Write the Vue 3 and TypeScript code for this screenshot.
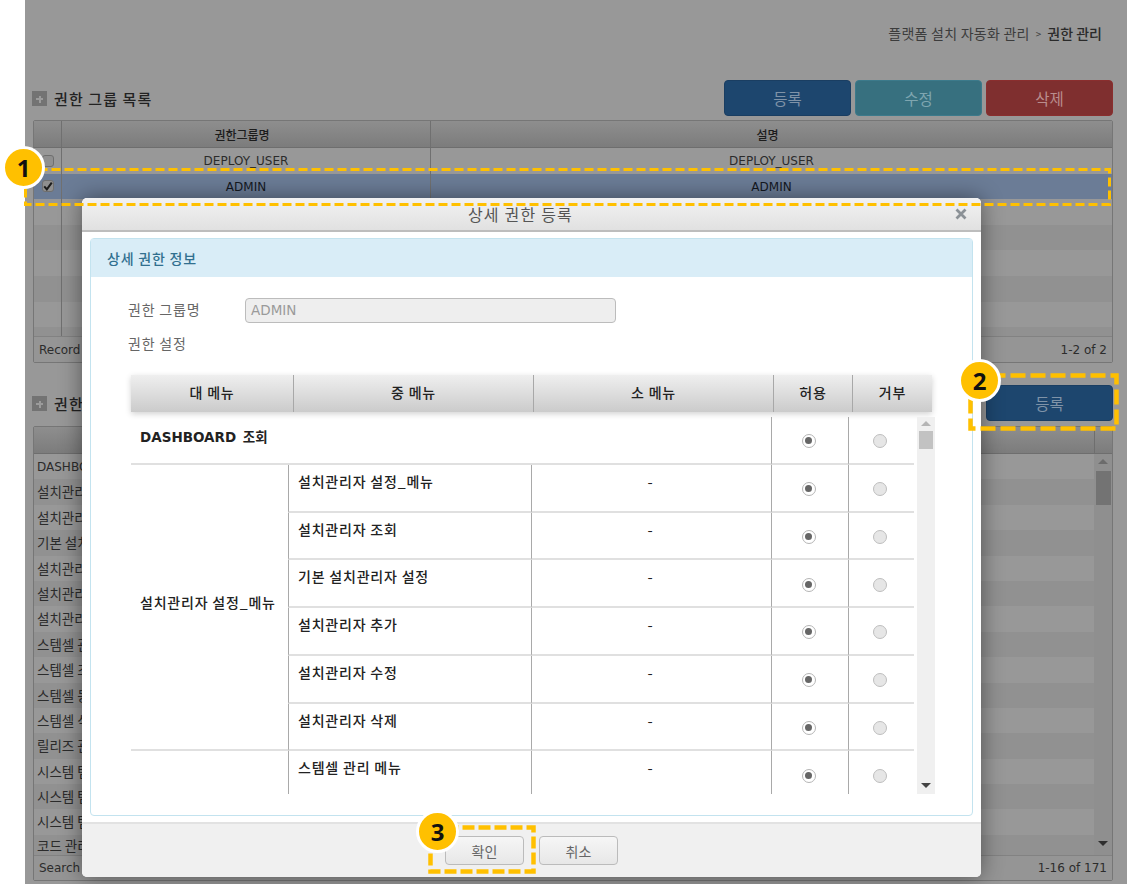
<script setup lang="ts">
const crumbs = '플랫폼 설치 자동화 관리'

const groupRows = [
  { name: 'DEPLOY_USER', desc: 'DEPLOY_USER', checked: false },
  { name: 'ADMIN', desc: 'ADMIN', checked: true },
  { name: '', desc: '', checked: false },
  { name: '', desc: '', checked: false },
  { name: '', desc: '', checked: false },
  { name: '', desc: '', checked: false },
  { name: '', desc: '', checked: false },
  { name: '', desc: '', checked: false },
]

const authRows = [
  'DASHBOARD 조회',
  '설치관리자 설정_메뉴',
  '설치관리자 조회',
  '기본 설치관리자 설정',
  '설치관리자 추가',
  '설치관리자 수정',
  '설치관리자 삭제',
  '스템셀 관리 메뉴',
  '스템셀 조회',
  '스템셀 등록',
  '스템셀 삭제',
  '릴리즈 관리',
  '시스템 템플릿 관리',
  '시스템 템플릿 조회',
  '시스템 템플릿 등록',
  '코드 관리',
]

const heads = ['대 메뉴', '중 메뉴', '소 메뉴', '허용', '거부']

const menus = [
  {
    name: '설치관리자 설정_메뉴',
    items: ['설치관리자 설정_메뉴', '설치관리자 조회', '기본 설치관리자 설정', '설치관리자 추가', '설치관리자 수정', '설치관리자 삭제'],
  },
  { name: '', items: ['스템셀 관리 메뉴'] },
]
</script>

<template>
  <div class="shell">
    <main class="page">
      <div class="crumbs"><span class="path">{{ crumbs }}</span> <span class="gt">&gt;</span> <b>권한 관리</b></div>

      <div class="toolbar">
        <h2 class="title"><i class="plus" />권한 그룹 목록</h2>
        <div class="btns">
          <button class="btn navy">등록</button>
          <button class="btn teal">수정</button>
          <button class="btn red">삭제</button>
        </div>
      </div>

      <section class="grid first">
        <div class="ghead">
          <div class="gc check" />
          <div class="gc name">권한그룹명</div>
          <div class="gc desc">설명</div>
        </div>
        <div class="gbody">
          <div
            v-for="(r, i) in groupRows"
            :key="i"
            class="grow"
            :class="{ alt: i % 2 === 1, sel: r.checked }"
          >
            <div class="gc check">
              <span v-if="r.name" class="box">
                <svg v-if="r.checked" viewBox="0 0 12 12" width="10" height="10">
                  <path d="M1.5 6.5 4.6 10 10.5 2" fill="none" stroke="#1b1b1b" stroke-width="2.4" />
                </svg>
              </span>
            </div>
            <div class="gc name">{{ r.name }}</div>
            <div class="gc desc">{{ r.desc }}</div>
          </div>
        </div>
        <div class="gfoot"><span>Record</span><span>1-2 of 2</span></div>
      </section>

      <div class="toolbar second">
        <h2 class="title"><i class="plus" />권한 목록</h2>
        <div class="btns">
          <button class="btn navy">등록</button>
        </div>
      </div>

      <section class="grid last">
        <div class="ghead">
          <div class="gc wide" />
          <div class="gc edge" />
        </div>
        <div class="lbody">
          <div class="lrows">
            <div v-for="(t, i) in authRows" :key="i" class="lrow" :class="{ alt: i % 2 === 1, ko: i > 0 }">{{ t }}</div>
          </div>
          <div class="lscroll">
            <i class="arrow up" />
            <i class="thumb" />
            <i class="arrow down" />
          </div>
        </div>
        <div class="gfoot"><span>Search</span><span>1-16 of 171</span></div>
      </section>
    </main>

    <div class="modal">
      <header class="mhead">
        <span>상세 권한 등록</span>
        <svg class="close" viewBox="0 0 12 12" width="12" height="12">
          <path d="M1.5 1.5 10.5 10.5M10.5 1.5 1.5 10.5" stroke="#8b9196" stroke-width="2.8" />
        </svg>
      </header>

      <div class="panel">
        <div class="phead">상세 권한 정보</div>
        <div class="pbody">
          <div class="frow">
            <label>권한 그룹명</label>
            <div class="input">ADMIN</div>
          </div>
          <div class="frow second-row"><label>권한 설정</label></div>

          <div class="thead">
            <div v-for="h in heads" :key="h" class="th">{{ h }}</div>
          </div>

          <div class="tscroll">
            <div class="tbody">
              <div class="td top span3"><b>DASHBOARD 조회</b></div>
              <div class="td line radio-cell"><i class="radio on" /></div>
              <div class="td line radio-cell deny"><i class="radio" /></div>
              <template v-for="m in menus" :key="m.name">
                <div class="td grp" :style="{ gridRow: 'span ' + m.items.length }">{{ m.name }}</div>
                <template v-for="it in m.items" :key="it">
                  <div class="td line sub">{{ it }}</div>
                  <div class="td line dash">-</div>
                  <div class="td line radio-cell"><i class="radio on" /></div>
                  <div class="td line radio-cell deny"><i class="radio" /></div>
                </template>
              </template>
            </div>
            <div class="tbar">
              <i class="arrow up light" />
              <i class="thumb light" />
              <i class="arrow down" />
            </div>
          </div>
        </div>
      </div>

      <footer class="mfoot">
        <button class="plain">확인</button>
        <button class="plain">취소</button>
      </footer>
    </div>

    <!-- guide marks on top of the screenshot -->
    <svg class="marks" width="1127" height="884" viewBox="0 0 1127 884">
      <rect x="25.5" y="169.5" width="1084" height="35" fill="none" stroke="#ffc000" stroke-width="3" stroke-dasharray="9 4" />
      <rect x="970.5" y="375.5" width="146" height="53" fill="none" stroke="#ffc000" stroke-width="4.5" stroke-dasharray="15 5" />
      <rect x="430.5" y="827.5" width="103" height="44" fill="none" stroke="#ffc000" stroke-width="4.5" stroke-dasharray="12 4" />
    </svg>
    <span class="badge one">1</span>
    <span class="badge two">2</span>
    <span class="badge three">3</span>
  </div>
</template>

<style scoped>
.shell {
  position: relative;
  width: 1127px;
  height: 884px;
  overflow: hidden;
  background: #fff;
  font-family: "DejaVu Sans", "Noto Sans CJK KR", sans-serif;
  font-size: 12px;
  color: #222;
}
.page {
  margin-left: 25px;
  height: 884px;
  padding: 0 14px 0 8px;
  box-sizing: border-box;
  background: #989898;
}
.crumbs {
  height: 66px;
  display: flex;
  align-items: center;
  justify-content: flex-end;
  gap: 6px;
  padding-right: 11px;
  font-family: "Noto Sans CJK KR", sans-serif;
  font-size: 14px;
  color: #3c3c3c;
}
.path { letter-spacing: 0.25px; }
.crumbs b { font-weight: 500; color: #2a2a2a; }
.gt { font-size: 10px; }
.toolbar {
  margin-top: 14px;
  height: 35px;
  display: flex;
  align-items: center;
  justify-content: space-between;
}
.toolbar.second { margin-top: 22px; height: 36px; }
.title {
  margin: 0 0 0 -1px;
  display: flex;
  align-items: center;
  gap: 7px;
  padding-top: 2px;
  font-family: "Noto Sans CJK KR", sans-serif;
  font-size: 15px;
  font-weight: 500;
  letter-spacing: 1.1px;
  color: #222;
}
.toolbar.second .title { padding-top: 1px; }
.plus {
  position: relative;
  width: 15px;
  height: 15px;
  background: #737373;
}
.plus::before, .plus::after {
  content: "";
  position: absolute;
  background: #9b9b9b;
}
.plus::before { left: 4px; top: 7px; width: 7px; height: 2px; }
.plus::after { left: 6.5px; top: 4.5px; width: 2px; height: 7px; }
.btns { display: flex; gap: 4px; }
.btn {
  width: 127px;
  height: 36px;
  border-radius: 4px;
  border: 1px solid transparent;
  font-family: "Noto Sans CJK KR", sans-serif;
  font-size: 15.5px;
  padding: 0;
}
.navy { background: #1d466e; border-color: #1a3e62; color: #7f93a8; }
.teal { background: #37707f; border-color: #3c7a8b; color: #7fa6b0; }
.red { background: #7f2f2f; border-color: #8a2e2e; color: #b98d8d; }

.grid {
  margin-top: 5px;
  border: 1px solid #767676;
  border-radius: 2px;
  display: flex;
  flex-direction: column;
}
.grid.first { height: 243px; box-sizing: border-box; }
.grid.last { height: 455px; box-sizing: border-box; }
.ghead {
  height: 26px;
  flex: none;
  display: flex;
  background: linear-gradient(#8e8e8e, #7c7c7c);
  border-bottom: 1px solid #6e6e6e;
  font-family: "Noto Sans CJK KR", sans-serif;
  font-weight: 500;
  color: #1c1c1c;
}
.ghead .gc.name, .ghead .gc.desc { padding-right: 8px; }
.gc {
  display: flex;
  align-items: center;
  justify-content: center;
  box-sizing: border-box;
}
.check { width: 27px; flex: none; }
.name { width: 369px; flex: none; border-left: 1px solid #707070; }
.desc { flex: 1; border-left: 1px solid #707070; }
.ghead .wide { flex: 1; }
.ghead .edge { width: 18px; flex: none; border-left: 1px solid #6e6e6e; }
.gbody { flex: 1; overflow: hidden; }
.grow {
  height: 25.6px;
  display: flex;
  background: #989898;
  color: #2b2b2b;
}
.grow.alt { background: #919191; }
.grow .gc.name, .grow .gc.desc { padding-top: 1px; }
.grow.sel { background: #6b7c96; color: #14181f; }
.box {
  width: 12px;
  height: 12px;
  box-sizing: border-box;
  margin-left: 1px;
  border: 1px solid #6f6f6f;
  border-radius: 3px;
  background: #8f8f8f;
  display: flex;
  align-items: center;
  justify-content: center;
}
.gfoot {
  height: 25px;
  flex: none;
  display: flex;
  align-items: center;
  justify-content: space-between;
  padding: 0 5px;
  border-top: 1px solid #828282;
  background: #959595;
  color: #2c2c2c;
}
.last .gfoot { height: 24px; }
.lbody { flex: 1; display: flex; overflow: hidden; min-height: 0; }
.lrows { flex: 1; overflow: hidden; }
.lrow {
  height: 25.4px;
  line-height: 27px;
  padding-left: 3px;
  background: #989898;
  color: #2b2b2b;
  white-space: nowrap;
}
.lrow.ko { font-family: "Noto Sans CJK KR", sans-serif; font-size: 13.5px; line-height: 24px; }
.lrow.alt { background: #919191; }
.lrow:last-child { height: 19.5px; line-height: 19.5px; padding-top: 1px; }
.lscroll {
  width: 18px;
  flex: none;
  background: #8f8f8f;
  display: flex;
  flex-direction: column;
  align-items: center;
  padding-top: 5px;
  box-sizing: border-box;
  position: relative;
}
.arrow { width: 0; height: 0; border-left: 5px solid transparent; border-right: 5px solid transparent; }
.arrow.up { border-bottom: 5px solid #6c6c6c; }
.arrow.down {
  position: absolute;
  bottom: 9px;
  border-top: 5px solid #2e2e2e;
}
.thumb {
  margin-top: 7px;
  width: 15px;
  height: 34px;
  background: #737373;
}

.modal {
  position: absolute;
  left: 82px;
  top: 198px;
  width: 899px;
  height: 679px;
  display: flex;
  flex-direction: column;
  background: #fff;
  border-radius: 5px;
  box-shadow: 0 0 22px rgba(0, 0, 0, 0.45);
  font-family: "Noto Sans CJK KR", sans-serif;
}
.mhead {
  position: relative;
  height: 34px;
  flex: none;
  box-sizing: border-box;
  display: flex;
  align-items: center;
  justify-content: center;
  padding-right: 22px;
  border-radius: 5px 5px 0 0;
  border-bottom: 2px solid #bdbdbd;
  background: linear-gradient(#f2f2f2, #e1e1e1);
  font-size: 16px;
  letter-spacing: 1.2px;
  color: #555;
}
.close { position: absolute; right: 14px; top: 10px; }
.panel {
  margin: 6px 8px 6px;
  flex: 1;
  min-height: 0;
  display: flex;
  flex-direction: column;
  border: 1px solid #c3e3ef;
  border-radius: 4px;
}
.phead {
  height: 37px;
  flex: none;
  display: flex;
  align-items: center;
  padding: 0 0 1px 16px;
  background: #d9edf7;
  color: #31708f;
  font-size: 14px;
  font-weight: 500;
  letter-spacing: 0.8px;
}
.pbody { flex: 1; padding: 21px 0 0 37px; min-height: 0; }
.frow { display: flex; align-items: center; height: 25px; }
.frow label { width: 117px; padding-bottom: 4px; color: #666; font-size: 14px; letter-spacing: 0.8px; }
.second-row { margin-top: 10px; height: 24px; }
.input {
  width: 371px;
  height: 25px;
  box-sizing: border-box;
  display: flex;
  align-items: center;
  padding: 0 0 1px 5px;
  background: #eee;
  border: 1px solid #bcbcbc;
  border-radius: 4px;
  color: #9a9a9a;
  font-family: "DejaVu Sans", sans-serif;
  font-size: 13.5px;
}
.thead {
  margin: 18px 0 0 3px;
  width: 801px;
  height: 37px;
  display: grid;
  grid-template-columns: 162px 240px 240px 79px 80px;
  background: linear-gradient(#efefef, #cbcbcb);
  box-shadow: 0 2px 6px rgba(0, 0, 0, 0.18);
}
.th {
  display: flex;
  align-items: center;
  justify-content: center;
  padding-bottom: 3px;
  border-left: 1px solid #a8a8a8;
  font-size: 14px;
  font-weight: 500;
  letter-spacing: 0.8px;
  color: #222;
}
.th:first-child { border-left: 0; }
.tscroll {
  margin: 5px 0 0 3px;
  height: 377px;
  display: flex;
  overflow: hidden;
}
.tbody {
  width: 783px;
  flex: none;
  display: grid;
  grid-template-columns: 157px 243px 240px 77px 66px;
  grid-auto-rows: 47.75px;
  align-self: flex-start;
  font-size: 14px;
  letter-spacing: 0.8px;
  color: #222;
}
.td {
  box-sizing: border-box;
  border-bottom: 2px solid #e0e0e0;
}
.span3 { grid-column: span 3; }
.top { padding: 9px 0 0 9px; font-family: "DejaVu Sans", "Noto Sans CJK KR", sans-serif; font-size: 13.5px; letter-spacing: 0; word-spacing: 2px; }
.top b { font-weight: 700; }
.grp {
  display: flex;
  align-items: center;
  padding: 0 0 10px 9px;
  font-weight: 500;
}
.line { border-left: 1px solid #a9a9a9; }
.sub { padding: 6px 0 0 9px; font-weight: 500; }
.dash { padding: 6px 2px 0 0; text-align: center; font-size: 15px; }
.radio-cell { display: flex; align-items: center; justify-content: center; padding: 3px 2px 0 0; }
.radio-cell.deny { padding-right: 4px; }
.radio {
  position: relative;
  width: 14px;
  height: 14px;
  box-sizing: border-box;
  border: 1.5px solid #bebebe;
  border-radius: 50%;
  background: #e6e6e6;
}
.radio.on { background: #fff; border-color: #b5b5b5; }
.radio.on::after {
  content: "";
  position: absolute;
  left: 2px;
  top: 2px;
  width: 7px;
  height: 7px;
  border-radius: 50%;
  background: #666;
}
.tbar {
  position: relative;
  margin-left: 3px;
  width: 18px;
  flex: none;
  background: #f0f0f0;
  display: flex;
  flex-direction: column;
  align-items: center;
  padding-top: 4px;
  box-sizing: border-box;
}
.arrow.up.light { border-bottom-color: #b5b5b5; }
.thumb.light { margin-top: 5px; width: 14px; height: 18px; background: #c2c2c2; }
.tbar .arrow.down { bottom: 6px; border-top-color: #444; }
.mfoot {
  height: 55px;
  flex: none;
  box-sizing: border-box;
  display: flex;
  gap: 15px;
  padding: 12px 0 0 363px;
  border-top: 2px solid #e2e2e2;
  background: #f0f0f0;
  border-radius: 0 0 5px 5px;
}
.plain {
  width: 79px;
  height: 29px;
  padding: 0;
  border: 1px solid #bbb;
  border-radius: 4px;
  background: linear-gradient(#f6f6f6, #e7e7e7);
  font-family: "Noto Sans CJK KR", sans-serif;
  font-size: 14px;
  color: #666;
}
.marks { position: absolute; left: 0; top: 0; pointer-events: none; }
.badge {
  position: absolute;
  width: 37px;
  height: 37px;
  display: flex;
  align-items: center;
  justify-content: center;
  border: 3px solid #fff;
  border-radius: 50%;
  background: #ffc000;
  font-family: "Noto Sans", sans-serif;
  font-size: 24px;
  font-weight: 700;
  color: #111;
}
.one { left: 2px; top: 146px; }
.two { left: 958px; top: 359px; }
.three { left: 416px; top: 810px; }
</style>

<style>
html, body { margin: 0; background: #fff; }
</style>
